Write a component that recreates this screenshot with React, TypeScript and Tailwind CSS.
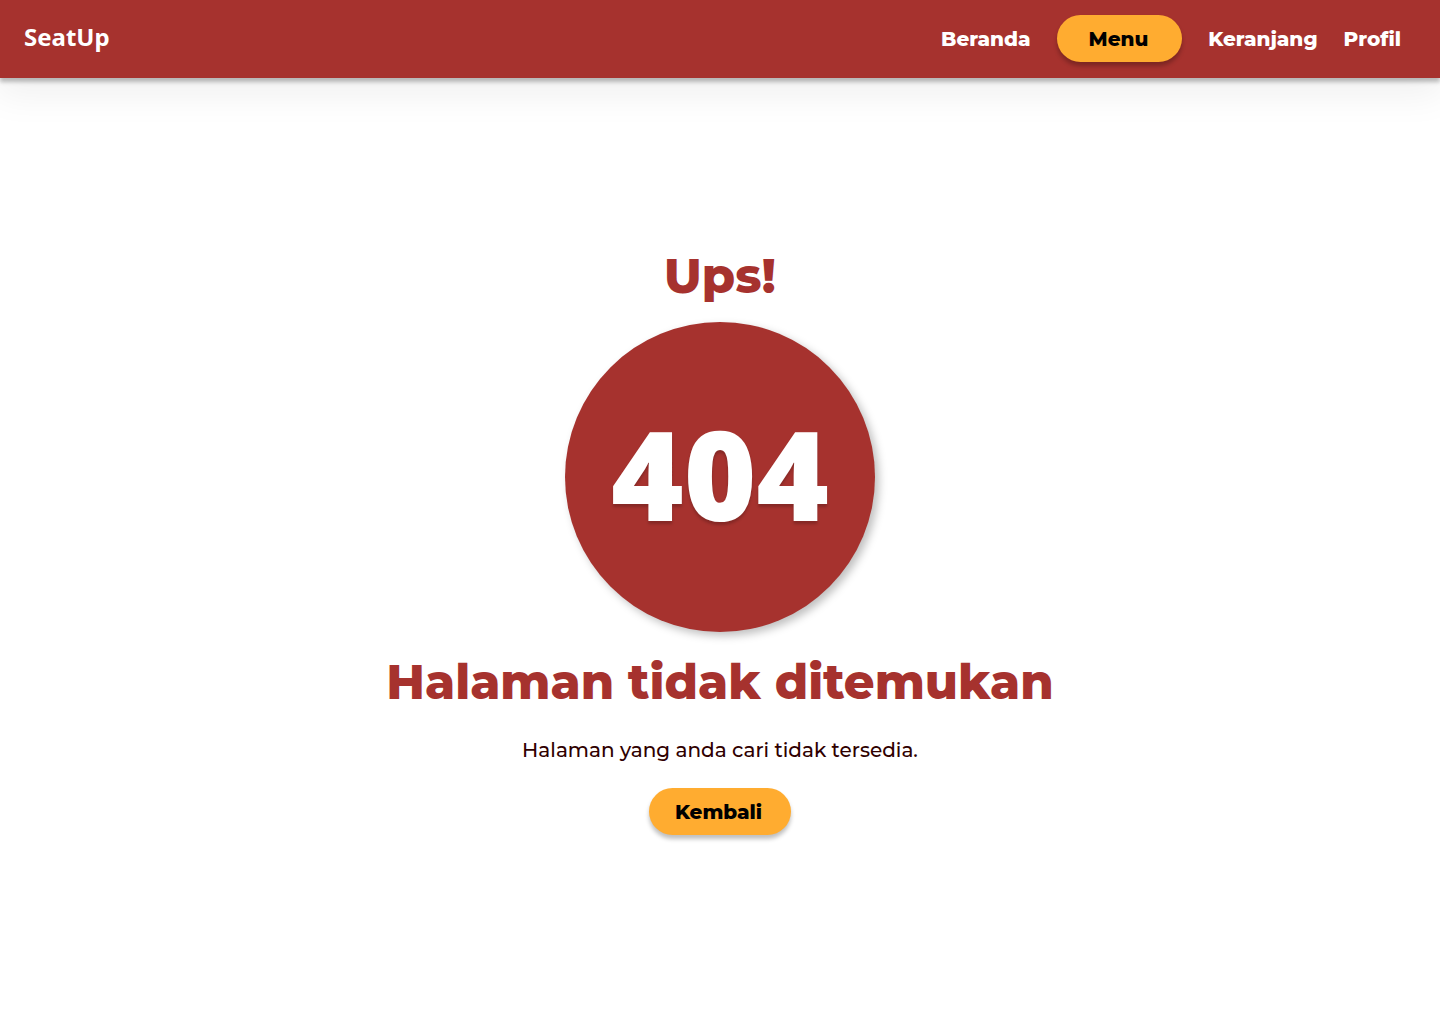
const links = [
  { label: "Beranda", href: "#beranda", active: false },
  { label: "Menu", href: "#menu", active: true },
  { label: "Keranjang", href: "#keranjang", active: false },
  { label: "Profil", href: "#profil", active: false },
];

function Header() {
  return (
    <header className="flex items-center justify-between bg-[#a6322e] pt-[15px] pr-[39px] pb-4 pl-6 shadow-[0_4px_4px_rgba(0,0,0,0.25),0_14px_36px_4px_rgba(0,0,0,0.06)]">
      <a href="#beranda" className="pb-1 font-['Noto_Sans',sans-serif] text-2xl leading-8 font-bold text-white">
        SeatUp
      </a>
      <nav aria-label="Navigasi utama" className="flex items-center gap-[26px] text-xl leading-[46px] font-extrabold">
        {links.map((link) => (
          <a
            key={link.label}
            href={link.href}
            aria-current={link.active ? "page" : undefined}
            className={
              link.active
                ? "rounded-full bg-[#ffac30] pt-px pr-[34px] pl-8 text-black shadow-[0_4px_4px_rgba(0,0,0,0.25)]"
                : "pt-px text-white"
            }
          >
            {link.label}
          </a>
        ))}
      </nav>
    </header>
  );
}

export default function App() {
  return (
    <div className="min-h-screen bg-white font-['Montserrat','Inter',sans-serif]">
      <Header />
      <main className="flex flex-col items-center px-6 pt-[168px] pb-16 text-center">
        <h1 className="text-5xl leading-[60px] font-extrabold text-[#a6322e]">Ups!</h1>
        <div className="mt-4 flex size-[310px] items-center justify-center rounded-full bg-[#a6322e] pb-2 shadow-[4px_4px_8px_rgba(0,0,0,0.25)]">
          <span className="font-['Noto_Sans',sans-serif] text-[124px] leading-none font-black text-white [text-shadow:0_3px_3px_rgba(0,0,0,0.2)]">
            404
          </span>
        </div>
        <h2 className="mt-5 text-5xl leading-[60px] font-extrabold text-[#a6322e]">Halaman tidak ditemukan</h2>
        <p className="mt-6 text-xl leading-7 font-medium text-[#2f0000]">Halaman yang anda cari tidak tersedia.</p>
        <button
          type="button"
          className="mt-6 rounded-full bg-[#ffac30] pt-px pr-[29px] pl-[26px] text-xl leading-[46px] font-extrabold text-black shadow-[0_4px_4px_rgba(0,0,0,0.25)]"
        >
          Kembali
        </button>
      </main>
    </div>
  );
}
